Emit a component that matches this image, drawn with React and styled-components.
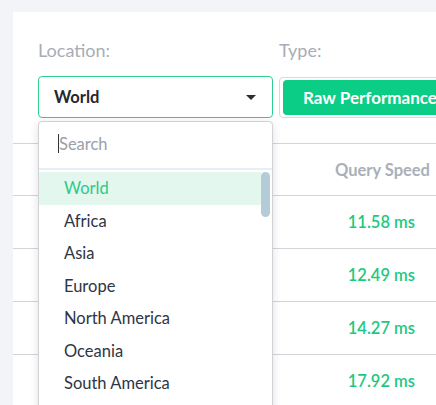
import React from 'react';
import styled, { createGlobalStyle } from 'styled-components';

const GlobalStyle = createGlobalStyle`
  html, body {
    margin: 0;
    padding: 0;
    background: #f2f4f7;
    overflow: hidden;
    font-family: "Source Sans Pro", Lato, "Noto Sans", sans-serif;
  }
`;

const Page = styled.div`
  padding: 12px 0 0 13px;
  height: 405px;
  box-sizing: border-box;
`;

const Card = styled.div`
  position: relative;
  background: #fff;
  height: 100%;
  overflow: hidden;
`;

const Filters = styled.div`
  display: flex;
  gap: 6px;
  padding: 28px 0 0 25px;
  white-space: nowrap;
`;

const Field = styled.div`
  position: relative;
  display: flex;
  flex-direction: column;
`;

const Label = styled.div`
  font-size: 18px;
  line-height: 21px;
  color: #a7adb6;
  margin-bottom: 15px;
`;

const Select = styled.div`
  width: 235px;
  height: 42px;
  box-sizing: border-box;
  border: 1px solid #2fd08f;
  border-radius: 4px;
  display: flex;
  align-items: center;
  justify-content: space-between;
  padding: 0 16px 0 15px;
  font-size: 16.5px;
  font-weight: 700;
  color: #232833;
`;

const Caret = styled.span`
  width: 0;
  height: 0;
  border-left: 5px solid transparent;
  border-right: 5px solid transparent;
  border-top: 5px solid #2a2d33;
  margin-top: 1px;
`;

const TypeGroup = styled.div`
  height: 41px;
  margin-top: 1px;
  box-sizing: border-box;
  border: 1px solid #d6d9de;
  border-radius: 4px;
  padding: 2px 3px;
  display: flex;
`;

const TypeButton = styled.div`
  background: #0ccd85;
  color: #fff;
  font-weight: 700;
  font-size: 17px;
  border-radius: 4px;
  display: flex;
  align-items: center;
  padding: 0 20px;
`;

const Table = styled.div`
  margin-top: 25px;
`;

const Row = styled.div`
  height: ${p => (p.$header ? 51 : 52)}px;
  border-top: 1px solid #d2d4d7;
  display: flex;
  align-items: center;
  justify-content: flex-end;
  padding-right: ${p => (p.$header ? 6 : 21)}px;
  font-size: 16.5px;
  font-weight: ${p => (p.$header ? 700 : 600)};
  color: ${p => (p.$header ? '#a9b0ba' : '#1ec87e')};
`;

const Dropdown = styled.div`
  position: absolute;
  top: calc(100% + 3px);
  left: 0;
  width: 235px;
  height: 300px;
  box-sizing: border-box;
  background: #fff;
  border: 1px solid #cfd2d6;
  border-radius: 4px;
  box-shadow: 0 2px 10px rgba(0, 0, 0, 0.12);
  z-index: 5;
`;

const Search = styled.div`
  height: 48px;
  box-sizing: border-box;
  padding: 0 0 3px 19px;
  display: flex;
  align-items: center;
  font-size: 16.5px;
  color: #9aa0a8;
  border-bottom: 2px solid #e6eff4;
`;

const Cursor = styled.span`
  width: 1px;
  height: 19px;
  background: #333;
`;

const List = styled.div`
  position: relative;
  padding: 2px 11px 0 0;
`;

const Option = styled.div`
  height: 32.5px;
  display: flex;
  align-items: center;
  padding-left: 25px;
  font-size: 16.5px;
  color: ${p => (p.$active ? '#2cca89' : '#2f3544')};
  background: ${p => (p.$active ? '#e3f7ef' : 'transparent')};
`;

const Scrollbar = styled.div`
  position: absolute;
  top: 2px;
  right: 2px;
  width: 9px;
  height: 45px;
  border-radius: 5px;
  background: #b3ccd8;
`;

const regions = ['World', 'Africa', 'Asia', 'Europe', 'North America', 'Oceania', 'South America'];
const speeds = ['11.58 ms', '12.49 ms', '14.27 ms', '17.92 ms'];

export default function App() {
  return (
    <>
      <GlobalStyle />
      <Page>
        <Card>
          <Filters>
            <Field>
              <Label>Location:</Label>
              <Select>
                World
                <Caret />
              </Select>
              <Dropdown>
                <Search>
                  <Cursor />
                  Search
                </Search>
                <List>
                  {regions.map((r, i) => (
                    <Option key={r} $active={i === 0}>{r}</Option>
                  ))}
                  <Scrollbar />
                </List>
              </Dropdown>
            </Field>
            <Field>
              <Label>Type:</Label>
              <TypeGroup>
                <TypeButton>Raw Performance</TypeButton>
              </TypeGroup>
            </Field>
          </Filters>
          <Table>
            <Row $header>Query Speed</Row>
            {speeds.map(s => (
              <Row key={s}>{s}</Row>
            ))}
          </Table>
        </Card>
      </Page>
    </>
  );
}
